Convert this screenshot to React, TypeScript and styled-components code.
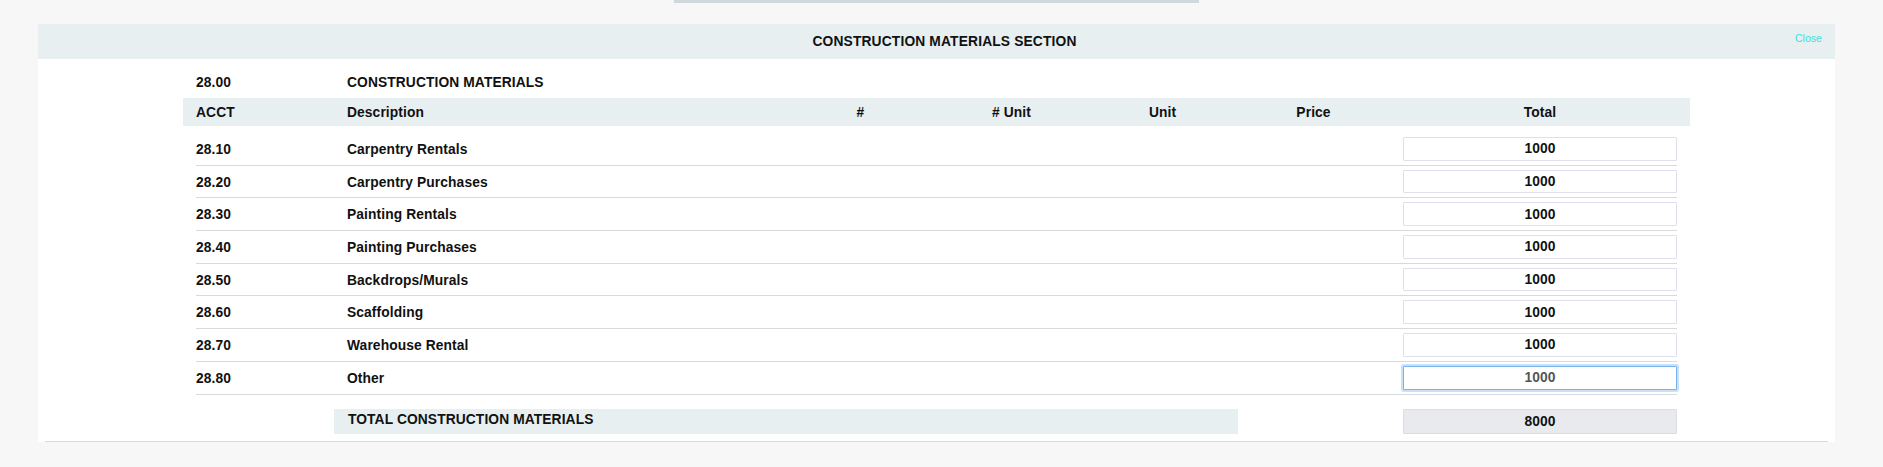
import React from "react";
import styled, { createGlobalStyle } from "styled-components";

const GlobalStyle = createGlobalStyle`
  html, body {
    margin: 0;
    padding: 0;
    background: #f7f7f7;
    font-family: "Liberation Sans", Arial, sans-serif;
    color: #111;
  }
  * { box-sizing: border-box; }
`;

const Page = styled.div`
  display: flex;
  flex-direction: column;
`;

const TopBar = styled.div`
  width: 525px;
  height: 3px;
  margin-left: 674px;
  background: #cfd9dc;
`;

const Panel = styled.section`
  margin: 21px 48px 0 38px;
  background: #ffffff;
  display: flex;
  flex-direction: column;
`;

const PanelHeader = styled.header`
  height: 35px;
  background: #e7eff1;
  display: grid;
  grid-template-columns: 1fr auto 1fr;
`;

const PanelTitle = styled.h1`
  grid-column: 2;
  margin: 0;
  padding: 1px 0 0 16px;
  align-self: center;
  font-size: 13.8px;
  font-weight: bold;
  letter-spacing: 0.15px;
  line-height: 18px;
  color: #111;
`;

const CloseLink = styled.a`
  grid-column: 3;
  justify-self: end;
  align-self: start;
  padding: 8px 13px 0 0;
  font-size: 10.6px;
  line-height: 12px;
  color: #40e0e0;
  cursor: pointer;
`;

const Body = styled.div`
  padding: 13px 145px 0;
  display: flex;
  flex-direction: column;
`;

const Grid = styled.div`
  display: grid;
  grid-template-columns: 151px 438px 151px 151px 151px 151px 1fr;
  align-items: center;
  font-size: 13.8px;
  font-weight: bold;
  letter-spacing: 0.1px;
`;

const SectionRow = styled(Grid)`
  padding: 0 13px;
  line-height: 18px;
`;

const HeadRow = styled(Grid)`
  margin-top: 6px;
  height: 28px;
  padding: 0 13px;
  background: #e7eff1;
  line-height: 18px;
`;

const Cell = styled.div<{ $center?: boolean; $end?: boolean }>`
  padding-top: 2px;
  text-align: ${(p) => (p.$center ? "center" : "left")};
  ${(p) => (p.$end ? "justify-self: end; width: 274px;" : "")}
`;

const Rows = styled.div`
  margin: 7px 13px 0;
  display: flex;
  flex-direction: column;
`;

const Row = styled(Grid)`
  padding: 4px 0;
  border-bottom: 1px solid #d6dcdc;
  line-height: 18px;
`;

const AmountInput = styled.input<{ $focused?: boolean; $total?: boolean }>`
  grid-column: 7;
  justify-self: end;
  width: 274px;
  height: ${(p) => (p.$total ? "25px" : "23.7px")};
  margin: 0;
  padding: 0 6px;
  border: 1px solid ${(p) => (p.$focused ? "#7ab2ec" : p.$total ? "#dcdee3" : "#dfe0ec")};
  border-radius: 1px;
  background: ${(p) => (p.$total ? "#e8eaed" : "#ffffff")};
  box-shadow: ${(p) => (p.$focused ? "0 0 0 2px rgba(122, 178, 236, 0.4)" : "none")};
  font-family: "Liberation Sans", Arial, sans-serif;
  font-size: 13.8px;
  font-weight: bold;
  letter-spacing: 0.1px;
  color: ${(p) => (p.$focused ? "#555" : "#111")};
  text-align: center;
  outline: none;
`;

const TotalRow = styled(Grid)`
  margin: 14px 13px 0;
`;

const TotalBar = styled.div`
  grid-column: 2 / 6;
  margin-left: -13px;
  height: 25px;
  padding: 3px 14px 0;
  line-height: 15px;
  background: #e7eff1;
`;

const FooterLine = styled.div`
  margin: 7px 7px 0;
  border-top: 1px solid #d3dbdb;
`;

const items = [
  ["28.10", "Carpentry Rentals"],
  ["28.20", "Carpentry Purchases"],
  ["28.30", "Painting Rentals"],
  ["28.40", "Painting Purchases"],
  ["28.50", "Backdrops/Murals"],
  ["28.60", "Scaffolding"],
  ["28.70", "Warehouse Rental"],
  ["28.80", "Other"],
];

export default function App() {
  return (
    <>
      <GlobalStyle />
      <Page>
        <TopBar />
        <Panel>
          <PanelHeader>
            <PanelTitle>CONSTRUCTION MATERIALS SECTION</PanelTitle>
            <CloseLink>Close</CloseLink>
          </PanelHeader>
          <Body>
            <SectionRow>
              <Cell>28.00</Cell>
              <Cell>CONSTRUCTION MATERIALS</Cell>
            </SectionRow>
            <HeadRow>
              <Cell>ACCT</Cell>
              <Cell>Description</Cell>
              <Cell $center>#</Cell>
              <Cell $center># Unit</Cell>
              <Cell $center>Unit</Cell>
              <Cell $center>Price</Cell>
              <Cell $center $end>Total</Cell>
            </HeadRow>
            <Rows>
              {items.map(([acct, desc], i) => (
                <Row key={acct}>
                  <Cell>{acct}</Cell>
                  <Cell>{desc}</Cell>
                  <AmountInput
                    readOnly
                    value="1000"
                    $focused={i === items.length - 1}
                  />
                </Row>
              ))}
            </Rows>
            <TotalRow>
              <TotalBar>TOTAL CONSTRUCTION MATERIALS</TotalBar>
              <AmountInput readOnly value="8000" $total />
            </TotalRow>
          </Body>
          <FooterLine />
        </Panel>
      </Page>
    </>
  );
}
